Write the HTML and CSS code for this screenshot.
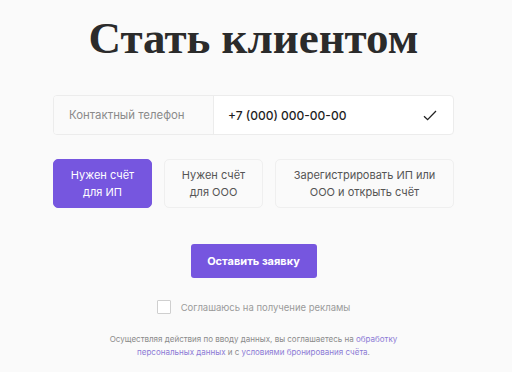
FILE: index.html
```html
<!DOCTYPE html>
<html lang="ru">
<head>
<meta charset="utf-8">
<link rel="stylesheet" href="styles.css">
</head>
<body>
<main class="page">
  <h1 class="title">Стать клиентом</h1>
  <div class="phone">
    <div class="phone-label">Контактный телефон</div>
    <div class="phone-input">
      <span class="phone-value">+7 (000) 000-00-00</span>
      <svg class="check" width="14" height="11" viewBox="0 0 14 11"><path d="M1 6.2 L4.6 9.6 L13 1" fill="none" stroke="#222" stroke-width="1.3"/></svg>
    </div>
  </div>
  <div class="options">
    <div class="opt opt-active">Нужен счёт<br>для ИП</div>
    <div class="opt opt-2">Нужен счёт<br>для ООО</div>
    <div class="opt opt-3">Зарегистрировать ИП или<br>ООО и открыть счёт</div>
  </div>
  <div class="submit-row">
    <button class="submit">Оставить заявку</button>
  </div>
  <label class="agree">
    <span class="box"></span>
    <span class="agree-text">Соглашаюсь на получение рекламы</span>
  </label>
  <p class="legal">Осуществляя действия по вводу данных, вы соглашаетесь на <span class="link">обработку<br>персональных данных</span> и с <span class="link">условиями бронирования счёта</span>.</p>
</main>
</body>
</html>
```
FILE: styles.css
```css
html, body {
  margin: 0;
  padding: 0;
  background: #fafafa;
}
body {
  font-family: Inter, "Noto Sans", sans-serif;
  color: #222;
}
.page {
  width: 401px;
  padding-left: 53px;
  display: flex;
  flex-direction: column;
}
.title {
  margin: 12px 0 0 0;
  font-family: "Liberation Serif", serif;
  font-weight: bold;
  font-size: 45px;
  line-height: 52px;
  color: #2b2b2b;
  text-align: center;
}
.phone {
  margin-top: 31px;
  height: 38px;
  display: flex;
  border: 1px solid #ececec;
  border-radius: 4px;
  background: #fff;
  overflow: hidden;
}
.phone-label {
  width: 144px;
  padding-left: 15px;
  background: #fafafa;
  border-right: 1px solid #ececec;
  display: flex;
  align-items: center;
  font-size: 11.4px;
  color: #8a8a8a;
}
.phone-input {
  flex: 1;
  display: flex;
  align-items: center;
  justify-content: space-between;
  padding: 0 16px 0 14px;
}
.phone-value {
  font-size: 12px;
  font-weight: 500;
  color: #1e1e1e;
}
.check {
  display: block;
}
.options {
  margin-top: 24px;
  display: flex;
  gap: 12px;
}
.opt {
  height: 49px;
  box-sizing: border-box;
  border: 1px solid #efefef;
  border-radius: 5px;
  background: #fafafa;
  display: flex;
  align-items: center;
  justify-content: center;
  text-align: center;
  font-size: 11px;
  line-height: 17px;
  color: #555;
}
.opt-active {
  width: 99px;
  background: #7656df;
  border-color: #7656df;
  color: #fff;
}
.opt-2 {
  width: 99px;
}
.opt-3 {
  flex: 1;
}
.submit-row {
  margin-top: 36px;
  display: flex;
  justify-content: center;
}
.submit {
  width: 126px;
  height: 34px;
  border: none;
  border-radius: 3px;
  background: #7656df;
  color: #fff;
  font-family: Inter, "Noto Sans", sans-serif;
  font-weight: 700;
  font-size: 11px;
  padding: 0;
}
.agree {
  margin-top: 22px;
  display: flex;
  align-items: center;
  justify-content: center;
  gap: 10px;
}
.box {
  width: 12px;
  height: 12px;
  border: 1px solid #cfcfcf;
  border-radius: 1px;
  background: #fff;
}
.agree-text {
  font-size: 9.5px;
  color: #9a9a9a;
}
.legal {
  margin: 19px 0 0 0;
  text-align: center;
  font-size: 8px;
  line-height: 12.5px;
  color: #8a8a8a;
}
.link {
  color: #8c7bd6;
}
```
